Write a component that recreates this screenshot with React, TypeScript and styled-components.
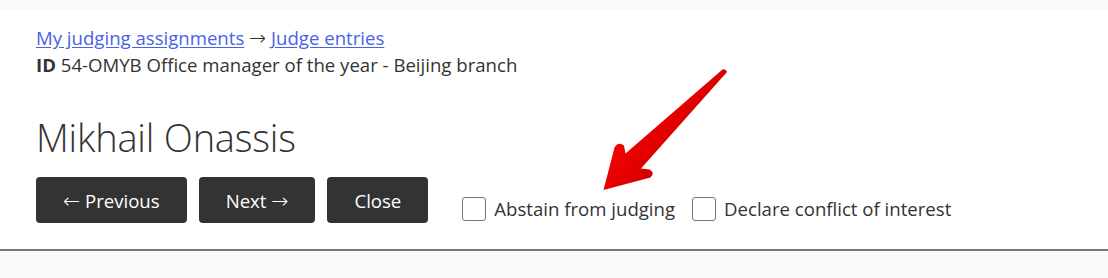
import styled, { createGlobalStyle } from "styled-components";

const GlobalStyle = createGlobalStyle`
  html, body {
    margin: 0;
    padding: 0;
    background: #f9f9f9;
    font-family: "Open Sans", "Liberation Sans", sans-serif;
    color: #333;
  }
`;

export default function App() {
  return (
    <>
      <GlobalStyle />
      <Panel>
        <Breadcrumbs>
          <Crumb href="#">My judging assignments</Crumb> <Arrow>→</Arrow> <Crumb href="#">Judge entries</Crumb>
        </Breadcrumbs>
        <EntryId>
          <strong>ID</strong> 54-OMYB Office manager of the year - Beijing branch
        </EntryId>

        <Title>Mikhail Onassis</Title>

        <Toolbar>
          <Buttons>
            <Button type="button">
              <Arrow>←</Arrow> Previous
            </Button>
            <Button type="button">
              Next <Arrow>→</Arrow>
            </Button>
            <Button type="button">Close</Button>
          </Buttons>

          <Options>
            <Option>
              <Checkbox type="checkbox" />
              Abstain from judging
            </Option>
            <Option>
              <Checkbox type="checkbox" />
              Declare conflict of interest
            </Option>
          </Options>
        </Toolbar>

        <Pointer width="140" height="136" viewBox="595 62 140 136" aria-hidden="true">
          <defs>
            <linearGradient id="arrow-fill" x1="0.2" y1="0.1" x2="0.8" y2="0.6">
              <stop offset="0" stopColor="#ff0a0a" />
              <stop offset="0.55" stopColor="#e80000" />
              <stop offset="1" stopColor="#c80000" />
            </linearGradient>
          </defs>
          <path
            d="M722.5 69.5 Q726 68.5 727 72 L641 168.5 L649.5 169.5 Q655.5 173 650.5 177.5 L603.5 190 L614.5 147.5 Q618 141 624 145.5 L625.5 153.5 Z"
            fill="url(#arrow-fill)"
          />
        </Pointer>
      </Panel>
    </>
  );
}

const Panel = styled.div`
  position: relative;
  margin-top: 10px;
  padding: 14px 36px 26px;
  background: #fff;
  border-bottom: 2px solid #777;
`;

const Breadcrumbs = styled.div`
  font-size: 18.6px;
  line-height: 27px;
`;

const Crumb = styled.a`
  color: #4763e4;
  text-decoration: underline;
  text-underline-offset: 2px;
`;

const Arrow = styled.span`
  font-family: "DejaVu Sans", sans-serif;
  font-size: 1.1em;
  font-weight: 300;
  line-height: 1;
`;

const EntryId = styled.div`
  font-size: 18.6px;
  line-height: 27px;

  strong {
    font-weight: 700;
  }
`;

const Title = styled.h1`
  margin: 38px 0 18px;
  font-size: 38px;
  font-weight: 300;
  line-height: 43px;
  letter-spacing: -0.2px;
`;

const Toolbar = styled.div`
  display: flex;
  flex-direction: row;
  align-items: flex-end;
  gap: 34px;
`;

const Buttons = styled.div`
  display: flex;
  gap: 12px;
`;

const Button = styled.button`
  height: 46px;
  padding: 0 27px;
  border: 0;
  border-radius: 4px;
  background: #333;
  color: #fff;
  font-family: inherit;
  font-size: 18.6px;
  white-space: nowrap;
  cursor: pointer;
`;

const Options = styled.div`
  display: flex;
  gap: 17px;
  margin-bottom: 2px;
`;

const Option = styled.label`
  display: flex;
  align-items: center;
  gap: 8px;
  font-size: 18.6px;
  line-height: 24px;
  white-space: nowrap;
`;

const Checkbox = styled.input`
  appearance: none;
  margin: 0;
  width: 24px;
  height: 24px;
  border: 1px solid #777;
  border-radius: 3px;
  background: #fff;
`;

const Pointer = styled.svg`
  position: absolute;
  left: 595px;
  top: 52px;
  pointer-events: none;
`;
